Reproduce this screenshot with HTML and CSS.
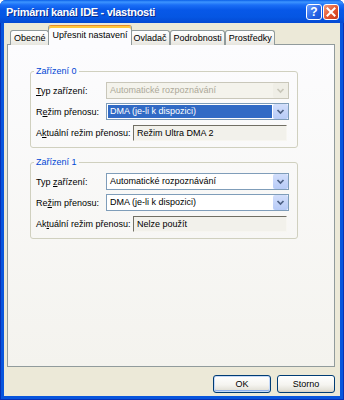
FILE: index.html
```html
<!DOCTYPE html>
<html>
<head>
  <title>Primární kanál IDE - vlastnosti</title>
  <link rel="stylesheet" href="styles.css">
</head>
<body>
  <div class="window">
    <div class="titlebar">
      <span class="title">Primární kanál IDE - vlastnosti</span>
      <div class="caption-buttons">
        <span class="cap-btn help">?</span>
        <span class="cap-btn close">
          <svg width="14" height="14" viewBox="0 0 14 14"><path d="M3.5 3.5 L10.5 10.5 M10.5 3.5 L3.5 10.5" stroke="#fff" stroke-width="2" stroke-linecap="square"/></svg>
        </span>
      </div>
    </div>

    <div class="client">
      <div class="tabs">
        <div class="tab">Obecné</div>
        <div class="tab active">Upřesnit nastavení</div>
        <div class="tab">Ovladač</div>
        <div class="tab">Podrobnosti</div>
        <div class="tab">Prostředky</div>
      </div>

      <div class="panel">
        <fieldset class="group">
          <legend>Zařízení 0</legend>
          <div class="row">
            <label><u>T</u>yp zařízení:</label>
            <div class="combo disabled">
              <span class="value">Automatické rozpoznávání</span>
              <span class="arrow"><svg width="13" height="13" viewBox="0 0 13 13"><path d="M3.5 5 L6.5 8 L9.5 5" fill="none" stroke="#C9C7BA" stroke-width="1.7"/></svg></span>
            </div>
          </div>
          <div class="row">
            <label>R<u>e</u>žim přenosu:</label>
            <div class="combo focused">
              <span class="value"><span class="sel">DMA (je-li k dispozici)</span></span>
              <span class="arrow"><svg width="13" height="13" viewBox="0 0 13 13"><path d="M3.5 5 L6.5 8 L9.5 5" fill="none" stroke="#4D6185" stroke-width="1.7"/></svg></span>
            </div>
          </div>
          <div class="row">
            <label>A<u>k</u>tuální režim přenosu:</label>
            <div class="readonly">Režim Ultra DMA 2</div>
          </div>
        </fieldset>

        <fieldset class="group">
          <legend>Zařízení 1</legend>
          <div class="row">
            <label>Typ <u>z</u>ařízení:</label>
            <div class="combo">
              <span class="value">Automatické rozpoznávání</span>
              <span class="arrow"><svg width="13" height="13" viewBox="0 0 13 13"><path d="M3.5 5 L6.5 8 L9.5 5" fill="none" stroke="#4D6185" stroke-width="1.7"/></svg></span>
            </div>
          </div>
          <div class="row">
            <label>Re<u>ž</u>im přenosu:</label>
            <div class="combo">
              <span class="value">DMA (je-li k dispozici)</span>
              <span class="arrow"><svg width="13" height="13" viewBox="0 0 13 13"><path d="M3.5 5 L6.5 8 L9.5 5" fill="none" stroke="#4D6185" stroke-width="1.7"/></svg></span>
            </div>
          </div>
          <div class="row">
            <label>Ak<u>t</u>uální režim přenosu:</label>
            <div class="readonly">Nelze použít</div>
          </div>
        </fieldset>
      </div>

      <div class="buttons">
        <button class="btn default">OK</button>
        <button class="btn">Storno</button>
      </div>
    </div>
  </div>
</body>
</html>
```

FILE: styles.css
```css
body {
  margin: 0;
  background: #FFFFFF;
  font-family: "Liberation Sans", Arial, sans-serif;
  font-size: 9px;
  color: #000000;
}

.window {
  width: 344px;
  height: 400px;
  box-sizing: border-box;
  display: flex;
  flex-direction: column;
  background: #0855DD;
  border: 1px solid #0731B5;
  border-top: none;
  border-radius: 6px 6px 0 0;
}

/* Title bar */
.titlebar {
  height: 23px;
  margin: 0 -1px;
  display: flex;
  align-items: center;
  padding: 0 5px 0 6px;
  border-radius: 6px 6px 0 0;
  background: linear-gradient(to bottom, #0A5FE8 0, #3D95FF 2px, #1A6EF6 5px, #0758E8 10px, #0556E3 17px, #0449D2 23px);
}

.title {
  color: #FFFFFF;
  font-weight: bold;
  font-size: 11px;
  letter-spacing: -0.3px;
  text-shadow: 1px 1px 0 #0B2C8E;
}

.caption-buttons {
  margin-left: auto;
  display: flex;
  gap: 1px;
}

.cap-btn {
  width: 16px;
  height: 16px;
  box-sizing: border-box;
  border: 1px solid #FFFFFF;
  border-radius: 3px;
  display: flex;
  align-items: center;
  justify-content: center;
}

.cap-btn.help {
  background: linear-gradient(135deg, #6FA1FF, #2563E6 60%, #1A4FD0);
  color: #FFFFFF;
  font-weight: bold;
  font-size: 12px;
}

.cap-btn.close {
  background: linear-gradient(135deg, #F39A7C, #E2552F 55%, #C7381A);
}

/* Client area */
.client {
  flex: 1;
  margin: 0 3px 3px 3px;
  padding: 3px 5px 3px 3px;
  background: #ECE9D8;
  display: flex;
  flex-direction: column;
}

.tabs {
  height: 19px;
  display: flex;
  align-items: flex-end;
  padding-left: 3px;
  position: relative;
  z-index: 1;
  margin-bottom: -1px;
}

.tab {
  height: 15px;
  box-sizing: border-box;
  padding: 0 2px 0 3px;
  line-height: 14px;
  border: 1px solid #919B9C;
  border-bottom: none;
  border-radius: 3px 3px 0 0;
  background: linear-gradient(to bottom, #FFFFFF, #F3F3EF 60%, #E6E5DE);
  white-space: nowrap;
}

.tab.active {
  height: 20px;
  margin: 0 -2px 0 -1px;
  padding: 2px 3px 0 4px;
  border-top: 1px solid #E68B2C;
  box-shadow: inset 0 2px 0 #FFC83C;
  background: #FCFCFE;
  position: relative;
  z-index: 2;
}

.panel {
  flex: 1;
  border: 1px solid #919B9C;
  background: linear-gradient(to bottom, #FCFCFE, #F4F3EE);
  padding: 20px 0 0 22px;
  display: flex;
  flex-direction: column;
  gap: 8px;
}

.group {
  width: 268px;
  box-sizing: border-box;
  margin: 0;
  border: 1px solid #D0D0BF;
  border-radius: 3px;
  padding: 5px 8px 6px 5px;
  display: flex;
  flex-direction: column;
  gap: 4px;
}

.group legend {
  color: #0046D5;
  padding: 0 2px;
  margin-left: -2px;
  line-height: 12px;
}

.row {
  height: 17px;
  display: flex;
  align-items: center;
}

.row label {
  width: 70px;
  white-space: nowrap;
}

.combo {
  width: 183px;
  height: 17px;
  box-sizing: border-box;
  border: 1px solid #7F9DB9;
  background: #FFFFFF;
  display: flex;
  align-items: stretch;
}

.combo .value {
  flex: 1;
  padding: 0 2px 0 3px;
  line-height: 15px;
  white-space: nowrap;
}

.combo .arrow {
  width: 15px;
  border-radius: 2px;
  background: linear-gradient(to bottom, #D2DEFB, #B7CBF7);
  display: flex;
  align-items: center;
  justify-content: center;
}

.combo.disabled {
  border-color: #C9C7BA;
  background: #F4F3EC;
  color: #ACA899;
}

.combo.disabled .arrow {
  background: #EFEEE6;
}

.combo.focused .value {
  padding: 1px;
}

.combo.focused .sel {
  display: block;
  height: 13px;
  line-height: 13px;
  padding-left: 2px;
  background: #316AC5;
  color: #FFFFFF;
}

.readonly {
  width: 154px;
  height: 16px;
  box-sizing: border-box;
  margin: 0 2px 0 auto;
  border-top: 1px solid #716F64;
  border-left: 1px solid #716F64;
  border-right: 1px solid #F7F6F1;
  border-bottom: 1px solid #F7F6F1;
  background: #F2F1EB;
  padding-left: 3px;
  line-height: 14px;
}

/* Dialog buttons */
.buttons {
  display: flex;
  justify-content: flex-end;
  gap: 6px;
  margin-top: 8px;
}

.btn {
  width: 58px;
  height: 18px;
  padding: 0;
  border: 1px solid #003C74;
  border-radius: 3px;
  font-family: "Liberation Sans", Arial, sans-serif;
  font-size: 9px;
  color: #000000;
  background: linear-gradient(to bottom, #FFFFFF, #F5F4F0 55%, #E5E3DA 85%, #D6D0C5);
}

.btn.default {
  box-shadow: inset 0 0 0 1px #C6D9F7, inset 0 -1px 0 1px #8FB0EC;
}
```
